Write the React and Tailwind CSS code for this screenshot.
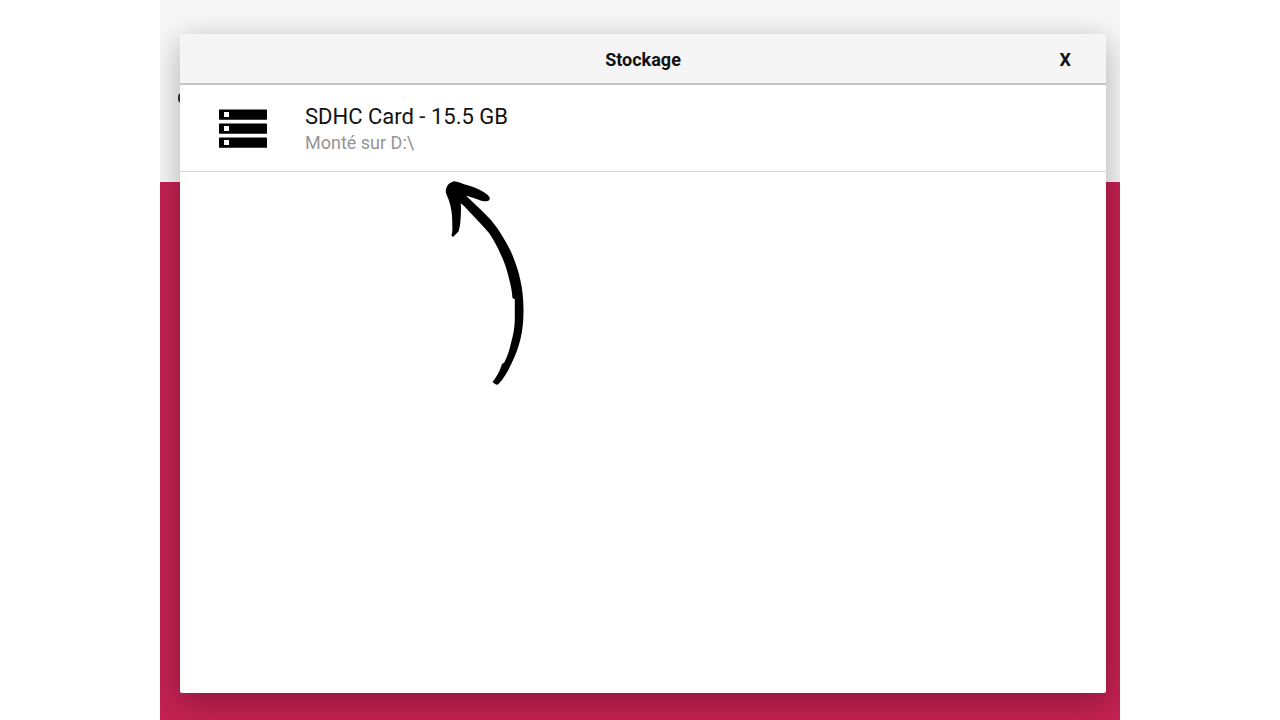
function StorageIcon() {
  return (
    <svg className="h-10 w-12 shrink-0" viewBox="0 0 48 40" aria-hidden="true">
      {[0, 14, 28].map((y) => (
        <g key={y}>
          <rect x="0" y={y + 0.5} width="48" height="10.2" rx="0.6" fill="#000" />
          <rect x="5" y={y + 3} width="5" height="5" fill="#fff" />
        </g>
      ))}
    </svg>
  );
}

function Arrow() {
  return (
    <svg
      className="pointer-events-none absolute top-[142px] left-[260px] h-[216px] w-[90px]"
      viewBox="440 176 90 216"
      aria-hidden="true"
    >
      <path
        fill="#000"
        d="M454 181.3 C458 181.500 461 183.500 465 184.500 C471 186 476 187.800 480 190 C485 192.500 489 195.500 489.800 198 C490 200 488.500 201.300 486 201.300 C483 201.500 480.500 200.500 478 199.500 C474 198 470 196.500 466 195.700 C474 203 483 211.500 491 220 C495.500 225.500 499.500 231 502.700 236.700 C507.500 244.500 511.500 252 514.300 260 C517 267 519 273.500 520.300 280 C522.500 289 523.500 299.500 523.500 310 C523.500 318 523 326 521.700 333 C520 342 517.500 350.500 514 358 C510 367.500 505 377 499 383.500 C498 384.800 496.700 385 495.500 384.200 L492.500 382 C496.500 377 500 371 502 364 L504.300 362.500 C507.500 356.500 509.500 350 511 343 C513.300 335.500 514.500 328 514.800 320 L514.800 299.200 L512.500 298 C512 291.500 510.800 285 509 278.500 C507 270 504.500 262 501 255 C497.500 247 493.500 239.500 489 233 C484 227 478 221 472.500 215 C468.500 211 465 206.500 460.700 203.300 C461.200 208 461 212.500 460.700 216.700 C460.500 222 460 227 458.500 231.500 L453 237 L451.500 235.500 C452.500 232 452.500 228.500 452.300 225 C452.300 218.500 452 212.500 450.700 206.700 C449.600 201.500 447.500 197 445.800 192.500 C445.500 188 448 184 450.500 182.800 Z"
      />
    </svg>
  );
}

export default function App() {
  return (
    <div className="flex min-h-screen justify-center bg-white font-['Roboto',sans-serif]">
      <main className="flex w-3/4 flex-col overflow-hidden bg-[linear-gradient(to_bottom,#f7f7f7_182px,#c42152_182px)] pt-[34px] pr-3.5 pb-[27px] pl-5">
        <div className="relative flex flex-1 flex-col">
          <span className="absolute top-[59px] -left-0.5 h-2.5 w-1 rounded-l-sm bg-[#333333]" />
          <section
            role="dialog"
            aria-labelledby="storage-title"
            className="relative flex flex-1 flex-col rounded-xs bg-white shadow-[0_8px_32px_rgba(0,0,0,0.3)]"
          >
            <header className="grid h-[51px] grid-cols-[1fr_auto_1fr] items-center rounded-t-xs border-b-2 border-[#c4c4c4] bg-[#f5f5f5] pt-0.5 text-lg font-bold text-[#111111]">
              <h1 id="storage-title" className="col-start-2">
                Stockage
              </h1>
              <button type="button" className="mr-7 justify-self-end px-[7px]">
                X
              </button>
            </header>
            <ul>
              <li className="border-b border-[#d4d4d4]">
                <button type="button" className="flex h-[86px] w-full items-center gap-[38px] pt-0.5 pl-[39px] text-left">
                  <StorageIcon />
                  <span className="flex flex-col">
                    <span className="text-[22px] leading-7 text-[#111111]">SDHC Card - 15.5 GB</span>
                    <span className="text-lg leading-6 text-[#959595]">Monté sur D:\</span>
                  </span>
                </button>
              </li>
            </ul>
            <Arrow />
          </section>
        </div>
      </main>
    </div>
  );
}
